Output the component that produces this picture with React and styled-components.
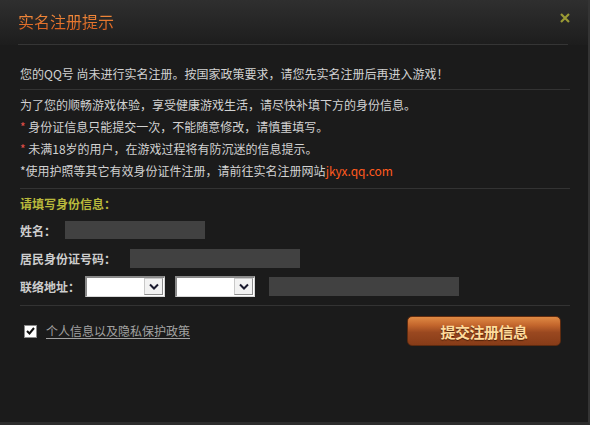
import React from 'react';
import styled, { createGlobalStyle } from 'styled-components';

const Global = createGlobalStyle`
    html, body {
        margin: 0;
        padding: 0;
        background: #1b1b1b;
    }
    * {
        box-sizing: border-box;
    }
`;

const Dialog = styled.div`
    width: 590px;
    height: 425px;
    background-color: #1b1b1b;
    border-right: 2px solid #343434;
    border-bottom: 3px solid #2c2c2c;
    font-family: "Noto Sans CJK SC", "Liberation Sans", sans-serif;
    font-size: 12px;
    color: #d2d2d2;
    display: flex;
    flex-direction: column;
`;

const Header = styled.div`
    background: linear-gradient(to bottom, #2f2f2f, #1d1d1d);
    padding: 0 20px 0 18px;
`;

const HeaderInner = styled.div`
    height: 45px;
    border-bottom: 1px solid #353535;
    display: flex;
    align-items: center;
    justify-content: space-between;
    padding-bottom: 2px;
`;

const Title = styled.h1`
    margin: 0;
    font-size: 16px;
    font-weight: normal;
    line-height: 18px;
    background: linear-gradient(to bottom, #f59040, #d86020);
    -webkit-background-clip: text;
    background-clip: text;
    color: transparent;
`;

const Close = styled.span`
    width: 10px;
    height: 10px;
    margin-right: -2px;
    margin-top: -6px;
    display: flex;
    cursor: pointer;
`;

const Body = styled.div`
    padding: 0 18px 0 20px;
`;

const Section = styled.div`
    padding-top: ${p => p.$top}px;
    padding-bottom: ${p => p.$bottom}px;
    border-bottom: 1px solid #333;
`;

const Line = styled.p`
    margin: 0;
    line-height: 22px;
    white-space: nowrap;
`;

const Star = styled.span`
    color: ${p => (p.$red ? '#e0504a' : '#d2d2d2')};
`;

const Link = styled.a`
    color: #ff5a1e;
    text-decoration: none;
`;

const FormTitle = styled.div`
    color: #b9b93c;
    font-weight: bold;
    line-height: 16px;
    margin-bottom: 8px;
`;

const Row = styled.div`
    display: flex;
    align-items: center;
    height: 20px;
    margin-top: ${p => p.$top || 0}px;
`;

const Label = styled.span`
    font-weight: bold;
    color: #cdcdcd;
    width: ${p => p.$w}px;
    flex-shrink: 0;
`;

const TextField = styled.div`
    width: ${p => p.$w}px;
    height: ${p => p.$h || 19}px;
    background-color: #414141;
    margin-left: ${p => p.$left || 0}px;
`;

const SelectBox = styled.div`
    width: 80px;
    height: 21px;
    margin-left: ${p => p.$left || 0}px;
    background: #fff;
    border-top: 2px solid #8a8a8a;
    border-left: 2px solid #8a8a8a;
    border-right: 1px solid #d8d8d8;
    border-bottom: 1px solid #d8d8d8;
    display: flex;
    justify-content: flex-end;
    align-items: stretch;
    padding: 0 1px 0 0;
`;

const SelectArrow = styled.span`
    width: 19px;
    background: #f2f2f2;
    border: 1px solid #8c8c8c;
    border-top-color: #c8c8c8;
    border-left-color: #c8c8c8;
    display: flex;
    align-items: center;
    justify-content: center;
    margin: 0 0 1px 0;
`;

const Footer = styled.div`
    display: flex;
    align-items: center;
    justify-content: space-between;
    padding: 10px 9px 0 4px;
`;

const Agree = styled.label`
    display: flex;
    align-items: center;
    gap: 9px;
    color: #a2a2a2;
    cursor: pointer;
`;

const CheckBox = styled.span`
    width: 13px;
    height: 13px;
    background: #fff;
    border: 1px solid #8a8a8a;
    display: flex;
    align-items: center;
    justify-content: center;
`;

const AgreeText = styled.span`
    text-decoration: underline;
    text-underline-offset: 2px;
    line-height: 16px;
`;

const SubmitButton = styled.button`
    width: 154px;
    height: 30px;
    border: 1px solid #5e2b10;
    border-radius: 5px;
    background: linear-gradient(to bottom, #e08a44 0%, #c2652c 30%, #9a4820 55%, #873c18 100%);
    color: #ffdb9c;
    font-family: "Noto Sans CJK SC", "Liberation Sans", sans-serif;
    font-size: 15px;
    font-weight: bold;
    letter-spacing: -0.5px;
    text-shadow: 0 1px 1px #4a1e08;
    cursor: pointer;
    padding: 0;
`;

const Chevron = () => (
    <svg width="10" height="7" viewBox="0 0 10 7">
        <path d="M1 1.5 L5 5.5 L9 1.5" stroke="#1a1a2e" strokeWidth="2" fill="none" />
    </svg>
);

const Select = ({ left }) => (
    <SelectBox $left={left}>
        <SelectArrow><Chevron /></SelectArrow>
    </SelectBox>
);

export default function App() {
    return (
        <>
            <Global />
            <Dialog>
                <Header>
                    <HeaderInner>
                        <Title>实名注册提示</Title>
                        <Close>
                            <svg width="10" height="10" viewBox="0 0 10 10">
                                <path d="M1 1 L9 9 M9 1 L1 9" stroke="#9a9a34" strokeWidth="2.2" />
                            </svg>
                        </Close>
                    </HeaderInner>
                </Header>
                <Body>
                    <Section $top={18} $bottom={4}>
                        <Line>您的QQ号 尚未进行实名注册。按国家政策要求，请您先实名注册后再进入游戏！</Line>
                    </Section>
                    <Section $top={4} $bottom={6}>
                        <Line>为了您的顺畅游戏体验，享受健康游戏生活，请尽快补填下方的身份信息。</Line>
                        <Line><Star $red>*</Star> 身份证信息只能提交一次，不能随意修改，请慎重填写。</Line>
                        <Line><Star $red>*</Star> 未满18岁的用户，在游戏过程将有防沉迷的信息提示。</Line>
                        <Line><Star>*</Star>使用护照等其它有效身份证件注册，请前往实名注册网站<Link href="#">jkyx.qq.com</Link></Line>
                    </Section>
                    <Section $top={7} $bottom={9}>
                        <FormTitle>请填写身份信息：</FormTitle>
                        <Row>
                            <Label $w={45}>姓名：</Label>
                            <TextField $w={140} $h={18} />
                        </Row>
                        <Row $top={8}>
                            <Label $w={110}>居民身份证号码：</Label>
                            <TextField $w={170} />
                        </Row>
                        <Row $top={8}>
                            <Label $w={65}>联络地址：</Label>
                            <Select />
                            <Select left={10} />
                            <TextField $w={190} $left={14} />
                        </Row>
                    </Section>
                    <Footer>
                        <Agree>
                            <CheckBox>
                                <svg width="9" height="8" viewBox="0 0 9 8">
                                    <path d="M1 4 L3.5 6.5 L8 1" stroke="#111" strokeWidth="2" fill="none" />
                                </svg>
                            </CheckBox>
                            <AgreeText>个人信息以及隐私保护政策</AgreeText>
                        </Agree>
                        <SubmitButton>提交注册信息</SubmitButton>
                    </Footer>
                </Body>
            </Dialog>
        </>
    );
}
